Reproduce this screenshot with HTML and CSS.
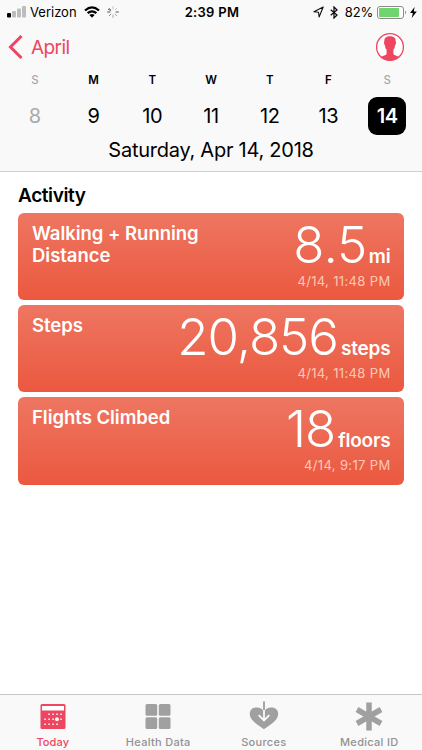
FILE: index.html
```html
<!DOCTYPE html>
<html lang="en">
<head>
<meta charset="utf-8">
<title>Health</title>
<link rel="stylesheet" href="styles.css">
</head>
<body>
<div class="app">
  <header class="header">
    <div class="status">
      <div class="status-left">
        <svg class="signal" width="20" height="12" viewBox="0 0 20 12"><rect x="0" y="7" width="4" height="4.500" rx="1"/><g fill="#bdbdbd"><rect x="5" y="5" width="4" height="6.500" rx="1"/><rect x="10" y="2.500" width="4" height="9" rx="1"/><rect x="15" y="0" width="4" height="11.500" rx="1"/></g></svg>
        <span class="carrier">Verizon</span>
        <svg class="wifi" width="16" height="12" viewBox="0 0 16 12"><g fill="none" stroke="#000" stroke-width="2.200"><path d="M1 4.500Q8-1.600 15 4.500M3.600 7.200Q8 3.400 12.400 7.200"/></g><path d="M5.400 9Q8 7 10.600 9L8 11.700Z"/></svg>
        <svg class="spinner" width="12" height="12" viewBox="-6 -6 12 12" stroke-width=".9" stroke-linecap="round"><path stroke="#444" d="M-2.600-1.500-4.700-2.700M-3 0H-5.400M3 0H5.400"/><path stroke="#777" d="M-2.100-2.100-3.800-3.800M-2.100 2.100-3.800 3.800"/><path stroke="#999" d="M0 3V5.400M2.100 2.100 3.800 3.800"/><path stroke="#bbb" d="M0-3V-5.400M2.100-2.100 3.800-3.800"/></svg>
      </div>
      <div class="clock">2:39 PM</div>
      <div class="status-right">
        <svg class="location" width="11" height="12" viewBox="0 0 11 12"><path d="M10.200 1 .9 5.700 5.500 6.200 6.100 11Z" fill="none" stroke="#111" stroke-width="1.100" stroke-linejoin="round"/></svg>
        <svg class="bluetooth" width="8" height="13" viewBox="0 0 8 13"><path d="M.7 3.700 7 9 4 12V1L7 4 .7 9.300" fill="none" stroke="#111" stroke-width="1.300"/></svg>
        <span class="percent">82%</span>
        <svg class="battery" width="30" height="13" viewBox="0 0 30 13"><rect x=".5" y=".5" width="26" height="12" rx="2.500" fill="#fff" stroke="#8b8b8b"/><rect x="2" y="2" width="20" height="9" rx=".8" fill="#70d56e"/><path d="M28 4.500Q30 6.500 28 8.500Z" fill="#8b8b8b"/></svg>
        <svg class="bolt" width="7" height="11" viewBox="0 0 7 11"><path d="M4.600 0 0 6H2.900L1.700 11 6.800 4.600H3.800Z"/></svg>
      </div>
    </div>
    <nav class="nav">
      <a class="back"><svg width="15" height="24" viewBox="0 0 15 24"><path d="M13.500 1 2.500 12 13.500 23" fill="none" stroke="#ee4560" stroke-width="3"/></svg><span>April</span></a>
      <svg class="profile" width="30" height="30" viewBox="0 0 30 30"><circle cx="15" cy="15" r="13.400" fill="#fff" stroke="#ee4560" stroke-width="1.300"/><path fill="#ee4560" d="M15 4.300C18.900 4.300 21 6 20.700 9.800 21.300 10.500 21 12.400 20.100 13.200 19.900 15.300 19.300 16.700 18.400 17.800V22C19.200 23.700 22.200 23.700 24.200 24.800A13.400 13.400 0 0 1 5.800 24.800C7.800 23.700 10.800 23.700 11.600 22V17.800C10.700 16.700 10.100 15.300 9.900 13.200 9 12.400 8.700 10.500 9.300 9.800 9 6 11.100 4.300 15 4.300Z"/></svg>
    </nav>
    <div class="week weekdays"><span class="muted">S</span><span>M</span><span>T</span><span>W</span><span>T</span><span>F</span><span class="muted">S</span></div>
    <div class="week days"><span class="muted">8</span><span>9</span><span>10</span><span>11</span><span>12</span><span>13</span><span class="selected">14</span></div>
    <div class="date"><span>Saturday, Apr 14, 2018</span></div>
  </header>
  <main class="content">
    <h2>Activity</h2>
    <article class="card">
      <h3>Walking + Running<br>Distance</h3>
      <div class="reading"><div class="value"><span class="number spaced">8.5</span><span class="unit">mi</span></div><time>4/14, 11:48 PM</time></div>
    </article>
    <article class="card">
      <h3>Steps</h3>
      <div class="reading"><div class="value"><span class="number">20,856</span><span class="unit">steps</span></div><time>4/14, 11:48 PM</time></div>
    </article>
    <article class="card">
      <h3>Flights Climbed</h3>
      <div class="reading"><div class="value"><span class="number">18</span><span class="unit">floors</span></div><time>4/14, 9:17 PM</time></div>
    </article>
  </main>
  <footer class="tabs">
    <a class="tab active"><svg width="30" height="30" viewBox="0 0 30 30"><rect x="2.500" y="3" width="25" height="25" rx="1.500" fill="currentColor"/><path fill="#fff" d="M4 5H26V9.500H4Z"/><g fill="none" stroke="#fff" stroke-width="1.500" stroke-dasharray="1.500 2.500"><path d="M10.300 13.200H24M6.300 18.200H24M6.300 23.200H20"/></g><circle cx="19" cy="18.200" r="2" fill="#fff"/></svg><span>Today</span></a>
    <a class="tab"><svg width="30" height="30" viewBox="0 0 30 30" fill="currentColor"><rect x="2.500" y="3" width="11.700" height="11.700" rx="1.500"/><rect x="15.800" y="3" width="11.700" height="11.700" rx="1.500"/><rect x="2.500" y="16.300" width="11.700" height="11.700" rx="1.500"/><rect x="15.800" y="16.300" width="11.700" height="11.700" rx="1.500"/></svg><span>Health Data</span></a>
    <a class="tab"><svg width="30" height="30" viewBox="0 0 30 30"><path fill="currentColor" d="M15 28.300C12.500 26 .8 20.200.8 13.300.8 8.800 3.500 6.500 7.500 6.500 11.500 6.500 13.300 8 15 9.800 16.700 8 18.500 6.500 22.500 6.500 26.500 6.500 29.200 8.800 29.200 13.300 29.200 20.200 17.500 26 15 28.300Z"/><path d="M15 8V19M9.700 14.200 15 19.500 20.300 14.200" fill="none" stroke="#fff" stroke-width="1.700"/><path d="M15 .5V9" stroke="#f9f9f9" stroke-width="3.400"/><path d="M15 .5V9" stroke="currentColor" stroke-width="1.900"/></svg><span>Sources</span></a>
    <a class="tab"><svg width="30" height="30" viewBox="0 0 30 30"><path d="M15 1.500V29.500M3 8.500 27 22.500M27 8.500 3 22.500" stroke="currentColor" stroke-width="5.500"/></svg><span>Medical ID</span></a>
  </footer>
</div>
</body>
</html>
```
FILE: styles.css
```css
* { box-sizing: border-box; }
body { margin: 0; font-family: Inter, "Liberation Sans", sans-serif; color: #000; background: #fff; }
svg { display: block; flex: none; }
.app { width: 422px; height: 750px; display: flex; flex-direction: column; }
.header { height: 172px; flex: none; background: #f9f9f9; border-bottom: 1px solid #cfcfcf; }
.status { height: 24px; display: grid; grid-template-columns: 1fr auto 1fr; align-items: center; padding: 0 5px 0 7px; font-size: 13px; line-height: 24px; }
.status-left, .status-right { display: flex; align-items: center; }
.status-right { justify-content: flex-end; }
.carrier { margin-left: 3px; }
.wifi { margin-left: 7px; }
.spinner { margin-left: 7px; }
.clock { font-weight: 600; letter-spacing: .3px; }
.bluetooth { margin-left: 6px; }
.percent { margin-left: 7px; letter-spacing: -.2px; }
.battery { margin-left: 4px; }
.bolt { margin-left: 3px; }
.nav { height: 46px; display: flex; align-items: center; justify-content: space-between; padding: 0 17px 0 8px; }
.back { display: flex; align-items: center; gap: 8px; color: #ee4560; font-size: 19px; letter-spacing: -.6px; }
.week { display: grid; grid-template-columns: repeat(7, 1fr); margin: 0 5.500px; text-align: center; }
.weekdays { height: 27px; font-size: 11.500px; font-weight: 600; line-height: 20px; }
.days { height: 38px; font-size: 20px; line-height: 39px; letter-spacing: -.4px; }
.muted { color: #aaa; font-weight: 400; }
.weekdays .muted { font-weight: 500; }
.selected { width: 38px; height: 38px; justify-self: center; border-radius: 9px; background: #000; color: #fff; font-weight: 600; }
.date { height: 31px; text-align: center; font-size: 20px; line-height: 31px; letter-spacing: -.25px; }
.content { flex: 1; padding: 12px 18px 0; }
h2 { margin: 0 0 4.600px; font-size: 19px; line-height: 24px; font-weight: 600; letter-spacing: -.4px; }
.card { height: 87.700px; margin-bottom: 4.500px; padding: 9px 13.500px 0 14px; border-radius: 6px; display: flex; justify-content: space-between; color: #fff; background: linear-gradient(#ee7661, #eb583f); }
h3 { margin: 0; font-size: 18.500px; line-height: 22.500px; font-weight: 600; letter-spacing: -.03px; white-space: nowrap; }
.reading { text-align: right; white-space: nowrap; }
.value { height: 50px; line-height: 45px; display: flex; align-items: baseline; justify-content: flex-end; }
.number { font-size: 51px; font-weight: 300; letter-spacing: -1px; }
.number.spaced { letter-spacing: 0; }
.unit { margin-left: 3px; font-size: 19px; font-weight: 600; letter-spacing: -.2px; }
.spaced + .unit { margin-left: 1.500px; }
time { display: block; font-size: 13px; line-height: 18px; letter-spacing: .35px; color: #ffc8b6; }
.tabs { height: 56px; flex: none; display: grid; grid-template-columns: repeat(4, 1fr); border-top: 1px solid #c6c6c6; background: #f9f9f9; }
.tab { display: flex; flex-direction: column; align-items: center; padding-top: 6px; color: #a0a0a0; font-size: 11px; font-weight: 500; line-height: 14px; letter-spacing: .3px; }
.tab span { margin-top: 4px; color: #929292; }
.tab.active, .tab.active span { color: #ee4560; }
.tab.active { letter-spacing: .1px; }
```
